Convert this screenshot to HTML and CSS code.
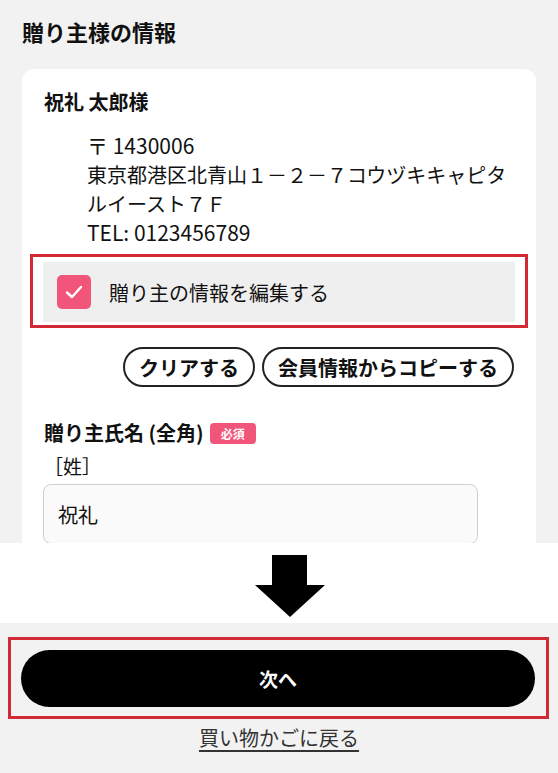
FILE: index.html
```html
<!DOCTYPE html>
<html lang="ja">
<head>
  <meta charset="UTF-8">
  <title>贈り主様の情報</title>
  <link rel="stylesheet" href="styles.css">
</head>
<body>

<div class="top-shot">
  <h2 class="section-title">贈り主様の情報</h2>

  <div class="card">
    <div class="sender-name">祝礼 太郎様</div>
    <div class="address">
      <div>〒 1430006</div>
      <div>東京都港区北青山１－２－７コウヅキキャピタ</div>
      <div>ルイースト７Ｆ</div>
      <div>TEL: 0123456789</div>
    </div>

    <div class="highlight">
      <label class="edit-check">
        <span class="check-box">
          <svg width="18" height="14" viewBox="0 0 18 14">
            <path d="M2 7.5 L7 12 L16 2" fill="none" stroke="#fff" stroke-width="2.4" stroke-linecap="round" stroke-linejoin="round"/>
          </svg>
        </span>
        <span>贈り主の情報を編集する</span>
      </label>
    </div>

    <div class="btn-row">
      <button class="pill-btn">クリアする</button>
      <button class="pill-btn">会員情報からコピーする</button>
    </div>

    <div class="field-label">贈り主氏名 (全角) <span class="required">必須</span></div>
    <div class="sub-label">［姓］</div>
    <div class="text-input">祝礼</div>
  </div>
</div>

<div class="arrow-band">
  <svg width="72" height="62" viewBox="0 0 72 62">
    <polygon points="18,0 53,0 53,30 71,30 36,62 1,30 18,30" fill="#000"/>
  </svg>
</div>

<div class="bottom-shot">
  <div class="highlight-wide">
    <button class="next-btn">次へ</button>
  </div>
  <a class="back-link" href="#">買い物かごに戻る</a>
</div>

</body>
</html>
```

FILE: styles.css
```css
body {
  margin: 0;
  width: 558px;
  height: 773px;
  display: flex;
  flex-direction: column;
  font-family: "Noto Sans CJK JP", "Noto Sans", sans-serif;
  color: #111;
}

.top-shot {
  height: 543px;
  overflow: hidden;
  background: #f2f2f2;
  padding: 0 22px;
}

.section-title {
  margin: 0;
  padding-top: 19px;
  font-size: 22px;
  line-height: 24px;
  font-weight: bold;
}

.card {
  margin-top: 26px;
  background: #fff;
  border-radius: 12px;
  padding: 21px 22px 30px;
}

.sender-name {
  font-size: 20px;
  line-height: 24px;
  font-weight: bold;
}

.address {
  margin-top: 17px;
  padding-left: 43px;
  font-size: 20px;
  line-height: 29px;
}

.address div:nth-child(1),
.address div:nth-child(4) {
  font-size: 21px;
}

.highlight {
  margin: 7px -14px 0;
  border: 3px solid #d12a35;
  padding: 5px 10px 3px;
}

.edit-check {
  display: flex;
  align-items: center;
  gap: 18px;
  height: 60px;
  padding-left: 14px;
  background: #efefef;
  font-size: 20px;
}

.check-box {
  width: 34px;
  height: 34px;
  border-radius: 5px;
  background: #f1567a;
  display: flex;
  align-items: center;
  justify-content: center;
}

.btn-row {
  display: flex;
  justify-content: flex-end;
  gap: 7px;
  margin-top: 19px;
}

.pill-btn {
  height: 40px;
  padding: 0 14px;
  border: 2px solid #222;
  border-radius: 20px;
  background: #fff;
  font-family: inherit;
  font-size: 20px;
  font-weight: bold;
  color: #111;
}

.field-label {
  margin-top: 34px;
  font-size: 20px;
  line-height: 24px;
  font-weight: bold;
  display: flex;
  align-items: center;
  gap: 6px;
}

.required {
  background: #f1567a;
  color: #fff;
  font-size: 12px;
  line-height: 21px;
  padding: 0 11px;
  border-radius: 4px;
}

.sub-label {
  margin-top: 9px;
  font-size: 19px;
  line-height: 24px;
}

.text-input {
  margin: 6px 36px 0 -1px;
  height: 58px;
  border: 1px solid #cfcfcf;
  border-radius: 8px;
  background: #fafafa;
  padding-left: 14px;
  display: flex;
  align-items: center;
  font-size: 20px;
}

.arrow-band {
  height: 80px;
  background: #fff;
  padding: 12px 0 0 254px;
  box-sizing: border-box;
}

.arrow-band svg {
  display: block;
}

.bottom-shot {
  flex: 1;
  background: #f2f2f3;
  display: flex;
  flex-direction: column;
  align-items: center;
}

.highlight-wide {
  align-self: stretch;
  margin: 14px 9px 0 8px;
  border: 3px solid #d12a35;
  padding: 10px 11px 9px 10px;
}

.next-btn {
  display: block;
  width: 100%;
  height: 57px;
  border: none;
  border-radius: 29px;
  background: #000;
  color: #fff;
  font-family: inherit;
  font-size: 19px;
  font-weight: bold;
}

.back-link {
  margin-top: 5px;
  font-size: 20px;
  line-height: 28px;
  color: #333;
  text-decoration: underline;
  text-underline-offset: 4px;
}
```
